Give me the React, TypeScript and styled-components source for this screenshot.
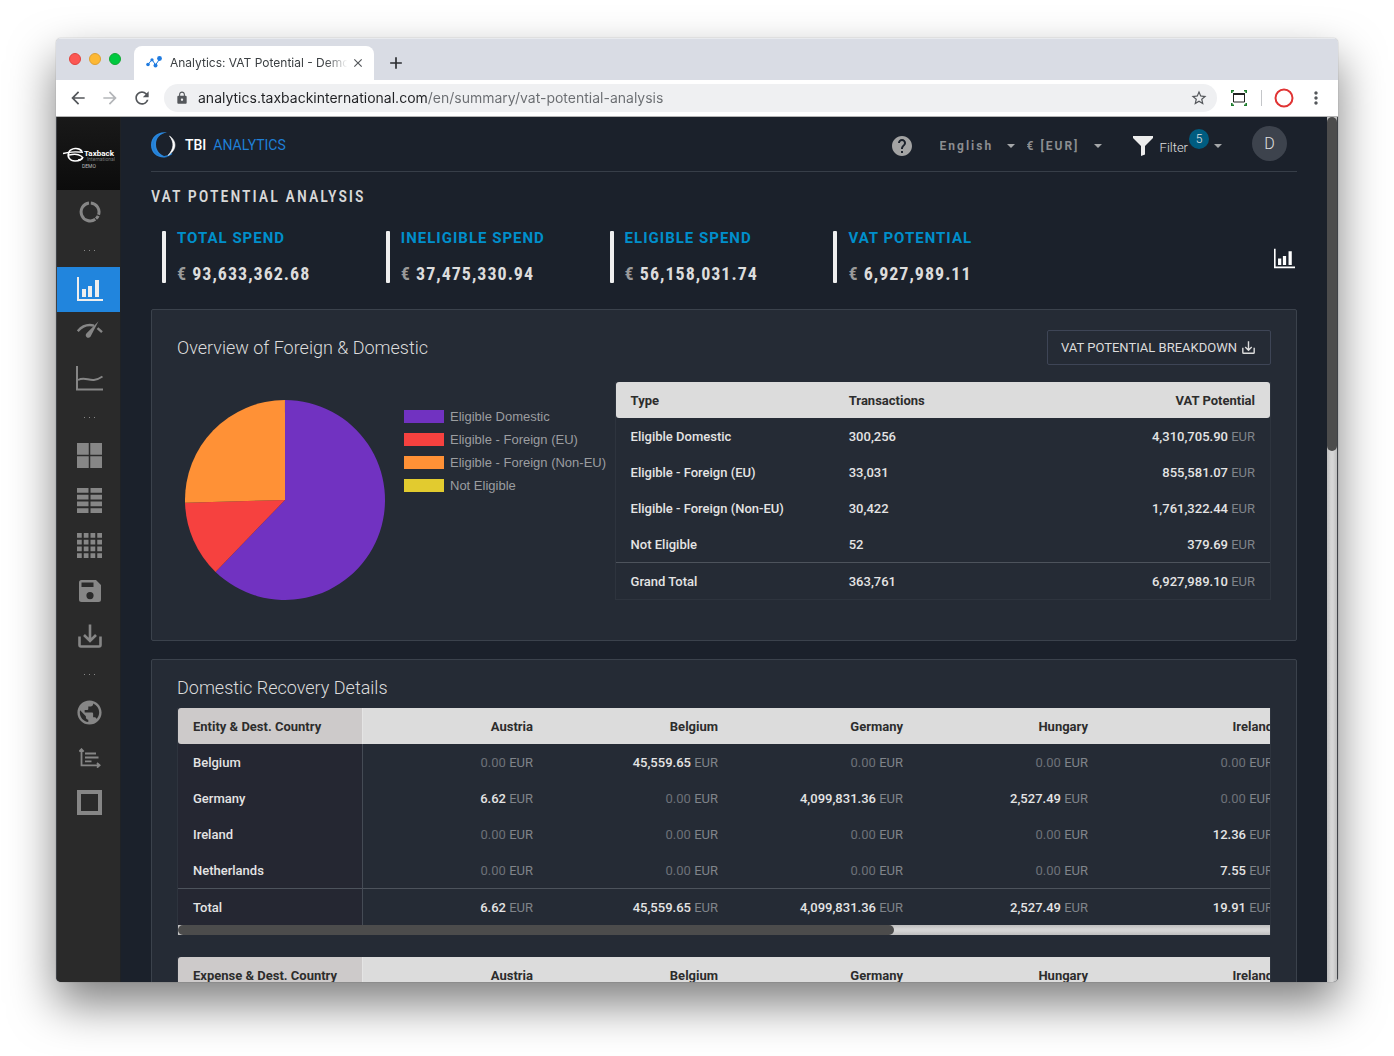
import React from "react";
import styled, { createGlobalStyle, css } from "styled-components";
import {
  MdArrowBack,
  MdArrowForward,
  MdClose,
  MdAdd,
  MdRefresh,
  MdLock,
  MdStarBorder,
  MdMoreVert,
  MdHelp,
  MdPublic,
} from "react-icons/md";

const roboto = `Roboto, "Liberation Sans", sans-serif`;
const condensed = `"Roboto Condensed", Roboto, "Liberation Sans", sans-serif`;

const Global = createGlobalStyle`
  *, *::before, *::after { box-sizing: border-box; }
  body { margin: 0; background: #fff; font-family: ${roboto}; }
  button, select, input { font: inherit; color: inherit; border: 0; background: none; padding: 0; margin: 0; }
  h1, h2, p, ul { margin: 0; padding: 0; }
  a { color: inherit; text-decoration: none; }
  svg { display: block; flex: none; }
`;

/* ---------- browser window ---------- */

const Desktop = styled.div`
  height: 100vh;
  padding: 38px 56px 74px;
  overflow: hidden;
`;

const Window = styled.div`
  height: 100%;
  display: flex;
  flex-direction: column;
  border-radius: 5px;
  overflow: hidden;
  background: #fff;
  box-shadow: 0 0 1px rgba(0, 0, 0, 0.5), 0 22px 46px rgba(0, 0, 0, 0.5);
`;

const TabStrip = styled.div`
  flex: none;
  height: 42px;
  display: flex;
  align-items: flex-end;
  background: #d9dce4;
  border-top: 1px solid #e8eaee;
`;

const Lights = styled.div`
  display: flex;
  gap: 8px;
  align-self: center;
  width: 78px;
  padding: 0 0 2px 13px;
`;

const Light = styled.span<{ $fill: string; $edge: string }>`
  width: 12px;
  height: 12px;
  border-radius: 50%;
  background: ${(p) => p.$fill};
  border: 1px solid ${(p) => p.$edge};
`;

const Tab = styled.div`
  width: 240px;
  height: 34px;
  display: flex;
  align-items: center;
  padding: 0 11px 2px 12px;
  background: #fff;
  border-radius: 8px 8px 0 0;
  color: #3c4043;
`;

const TabTitle = styled.span`
  flex: 1;
  margin-left: 8px;
  overflow: hidden;
  white-space: nowrap;
  font-size: 12px;
  font-family: Inter, Roboto, sans-serif;
  mask-image: linear-gradient(90deg, #000 86%, transparent 98%);
`;

const IconButton = styled.button<{ $size?: number; $tone?: string }>`
  width: ${(p) => p.$size ?? 20}px;
  height: ${(p) => p.$size ?? 20}px;
  flex: none;
  display: grid;
  place-items: center;
  color: ${(p) => p.$tone ?? "#54575b"};
  cursor: pointer;
`;

const NewTab = styled(IconButton)`
  margin: 0 0 7px 12px;
`;

const Toolbar = styled.div`
  flex: none;
  height: 37px;
  display: flex;
  align-items: center;
  padding: 0 12px;
  gap: 12px;
  border-bottom: 1px solid #b4b4b4;
`;

const Omnibox = styled.label`
  flex: 1;
  height: 28px;
  display: flex;
  align-items: center;
  gap: 9px;
  padding: 0 8px 1px 11px;
  border-radius: 14px;
  background: #eff0f2;
  color: #54575b;
`;

const UrlInput = styled.input`
  flex: 1;
  min-width: 0;
  height: 20px;
  font-family: Inter, Roboto, sans-serif;
  font-size: 14px;
  outline: 0;
  background: linear-gradient(90deg, #202124 229px, #6a6d71 229px);
  background-clip: text;
  -webkit-background-clip: text;
  -webkit-text-fill-color: transparent;
`;

const Extensions = styled.div`
  display: flex;
  align-items: center;
  gap: 12px;
`;

const Separator = styled.span`
  width: 1px;
  height: 16px;
  background: #c4c6c9;
`;

/* ---------- page frame ---------- */

const Viewport = styled.div`
  flex: 1;
  min-height: 0;
  display: flex;
  background: #1b212b;
  border: solid #3f4247;
  border-width: 0 1px;
`;

const Sidebar = styled.nav`
  flex: none;
  width: 64px;
  background: #2a2a2a;
  border-right: 1px solid #1f2226;
  overflow: hidden;
`;

const SideLogo = styled.a`
  height: 73px;
  display: grid;
  place-items: center;
  background: linear-gradient(#191919, #0c0c0c);
`;

const SideItem = styled.a<{ $active?: boolean }>`
  height: 45px;
  padding: 0 0 2px 2px;
  display: grid;
  place-items: center;
  color: ${(p) => (p.$active ? "#eeeeee" : "#868686")};
  background: ${(p) => (p.$active ? "#2185dd" : "none")};
`;

const SideDots = styled.div`
  height: 32px;
  display: flex;
  align-items: center;
  justify-content: center;
  gap: 4px;
  padding: 0 0 2px 2px;

  span {
    width: 1px;
    height: 1px;
    background: #888;
  }
`;

const Main = styled.main`
  flex: 1;
  min-width: 0;
  padding: 0 30px;
  overflow: hidden;
`;

const VScroll = styled.div`
  flex: none;
  width: 10px;
  background: linear-gradient(90deg, #bdbdbd, #d6d6d6 40%, #d6d6d6 60%, #bdbdbd);
`;

const VThumb = styled.div`
  height: 334px;
  border-radius: 5px;
  background: #4c4c4c;
`;

/* ---------- header ---------- */

const Header = styled.header`
  height: 55px;
  display: flex;
  align-items: center;
  border-bottom: 1px solid #373e48;
`;

const Brand = styled.a`
  display: flex;
  align-items: center;
  padding-top: 2px;
  font-size: 14px;
  color: #1f7fd6;

  b {
    margin: 0 7px 0 9px;
    font-weight: 500;
    color: #fff;
  }
`;

const Tools = styled.div`
  margin-left: auto;
  padding-top: 4px;
  display: flex;
  align-items: center;
`;

const Pickers = styled.div`
  display: flex;
  gap: 12px;
  margin: 0 31px 0 26px;
`;

const Picker = styled.label`
  display: grid;
  align-items: center;
  width: 75px;
  color: #8b8d90;

  > * {
    grid-area: 1 / 1;
  }

  > svg {
    justify-self: end;
    pointer-events: none;
  }
`;

const Select = styled.select`
  appearance: none;
  width: 100%;
  font-size: 12px;
  font-weight: 700;
  letter-spacing: 2px;
`;

const FilterButton = styled.button`
  display: flex;
  align-items: center;
  color: #e0e0e0;
  font-size: 13px;
  font-weight: 300;
  cursor: pointer;
`;

const FilterText = styled.span`
  margin-left: 7px;
  padding-top: 3px;
`;

const Badge = styled.span`
  width: 20px;
  height: 20px;
  margin: 0 5px 14px 1px;
  border-radius: 50%;
  background: #005c80;
  font-size: 12px;
  line-height: 20px;
  text-align: center;
`;

const Avatar = styled.button`
  width: 35px;
  height: 35px;
  margin: 0 10px 6px 30px;
  border-radius: 50%;
  background: #3d434d;
  color: #e0e0e0;
  font-size: 16px;
  font-weight: 300;
  cursor: pointer;
`;

/* ---------- summary ---------- */

const PageTitle = styled.h1`
  padding-top: 15px;
  font-family: ${condensed};
  font-size: 16px;
  line-height: 20px;
  font-weight: 500;
  letter-spacing: 2px;
  color: #d8d8d8;
`;

const Summary = styled.section`
  display: grid;
  grid-template-columns: repeat(5, 1fr);
  align-items: center;
  margin: 24px 16px 26px 11px;
`;

const Kpi = styled.div`
  height: 52px;
  display: flex;
  gap: 11px;

  &::before {
    content: "";
    width: 4px;
    border-radius: 1px;
    background: #efefef;
  }
`;

const KpiLabel = styled.p`
  font-size: 15px;
  line-height: 14px;
  font-weight: 700;
  letter-spacing: 1px;
  color: #008fcb;
`;

const KpiValue = styled.p`
  margin-top: 19px;
  font-family: ${condensed};
  font-size: 18px;
  line-height: 20px;
  font-weight: 700;
  letter-spacing: 1px;
  color: #dcdcdc;

  span {
    color: #9a9a9a;
  }
`;

const ChartToggle = styled.button`
  justify-self: end;
  margin: 2px -14px 0 0;
  color: #fff;
  cursor: pointer;
`;

/* ---------- cards ---------- */

const Card = styled.section<{ $pad: string }>`
  padding: ${(p) => p.$pad};
  margin-bottom: 18px;
  border: 1px solid #3b424c;
  border-radius: 2px;
  background: #252b35;
`;

const CardHead = styled.div`
  display: flex;
  align-items: center;
  justify-content: space-between;
  margin-bottom: 17px;
`;

const CardTitle = styled.h2<{ $gap?: number }>`
  margin-bottom: ${(p) => p.$gap ?? 0}px;
  font-size: 18px;
  line-height: 24px;
  font-weight: 300;
  color: #dcdcdc;
`;

const OutlineButton = styled.button`
  height: 35px;
  display: flex;
  align-items: center;
  gap: 5px;
  padding: 0 15px 0 13px;
  border: 1px solid #3e4556;
  border-radius: 2px;
  color: #dcdcdc;
  font-size: 13px;
  cursor: pointer;
`;

const Split = styled.div`
  display: grid;
  grid-template-columns: 2fr 3fr;
`;

const ChartArea = styled.div`
  display: flex;
  gap: 19px;
  padding: 18px 0 0 8px;
  min-width: 0;
`;

const Legend = styled.ul`
  padding-top: 5px;
  list-style: none;
  font-family: "Liberation Sans", Arial, sans-serif;
  font-size: 13px;
  line-height: 23px;
  color: #9b9da0;
  white-space: nowrap;
`;

const LegendItem = styled.li<{ $color: string }>`
  display: flex;
  align-items: center;
  gap: 6px;

  &::before {
    content: "";
    width: 40px;
    height: 13px;
    background: ${(p) => p.$color};
  }
`;

const Table = styled.table<{ $pinned?: boolean }>`
  width: ${(p) => (p.$pinned ? "1110px" : "100%")};
  table-layout: fixed;
  border-collapse: separate;
  border-spacing: 0;
  font-size: 13px;
  font-weight: 500;
  color: #e4e4e4;

  th,
  td {
    height: 36px;
    padding: 0 15px;
    text-align: left;
    white-space: nowrap;
  }

  thead th {
    background: #dcdcdc;
    color: #2d2d2d;
    font-weight: 700;
  }

  tbody th {
    font-weight: 500;
  }

  tfoot th,
  tfoot td {
    height: 37px;
    border-top: 1px solid #4d535c;
    font-weight: 500;
  }

  thead th:first-child {
    border-radius: 3px 0 0 3px;
  }

  ${(p) =>
    p.$pinned
      ? css`
          th:first-child {
            background: #252732;
            border-right: 1px solid #454b55;
          }
          thead th:first-child {
            background: #cdcaca;
            border-right-color: #e4e4e4;
          }
          th:not(:first-child),
          td {
            text-align: right;
          }
        `
      : css`
          thead th:last-child {
            border-radius: 0 3px 3px 0;
          }
          th:last-child,
          td:last-child {
            text-align: right;
          }
        `}
`;

const TableFrame = styled.div`
  border: 1px solid #2e343e;
  border-top: 0;
  overflow: hidden;
`;

const ScrollFrame = styled.div`
  border: solid #2e343e;
  border-width: 0 1px;
  overflow: hidden;
  margin-bottom: 22px;
`;

const HScroll = styled.div`
  height: 10px;
  background: linear-gradient(#bdbdbd, #d4d4d4 40%, #d4d4d4 60%, #bdbdbd);
`;

const HThumb = styled.div`
  width: 716px;
  height: 10px;
  border-radius: 5px;
  background: #4c4c4c;
`;

const Unit = styled.span`
  color: #80848a;
  font-weight: 400;
`;

const Zero = styled.span`
  color: #6d7178;
  font-weight: 400;
`;

/* ---------- drawings ---------- */

const Caret = () => (
  <svg width="8" height="4" viewBox="0 0 8 4">
    <path d="M0 0h8L4 4z" fill="#a5a7a9" />
  </svg>
);

const BarsIcon = ({ size }: { size: number }) => (
  <svg width={size} height={size} viewBox="0 0 26 26" fill="currentColor">
    <path d="M0 1h2v22h24v2H0zM5 13h4v8H5zM11 10h4v11h-4zM18 4h4v17h-4z" />
  </svg>
);

const DownloadIcon = ({ size }: { size: number }) => (
  <svg width={size} height={size} viewBox="0 0 24 24" fill="none" stroke="currentColor" strokeWidth="2.600">
    <path d="M1.500 12.500v8.500q0 1.500 1.500 1.500h18q1.500 0 1.500-1.500v-8.500M12 .5v16M6 11l6 6 6-6" />
  </svg>
);

const BrandMark = () => (
  <svg width="25" height="26" viewBox="0 0 25 26">
    <path d="M16 .6C8-1 0 4 0 13s8 14.500 17.500 11.800C10 24.500 5 19 5 12.500 5 6 9 1.800 16 .6z" fill="#2b86db" />
    <path d="M8 3A11.500 11.500 0 0 0 8 23M12 24.500q5 .5 9-3" fill="none" stroke="#1f7fd6" strokeWidth="1.200" />
    <path d="M18.500 4C26 9 26 18 17 23.500 23 17 23.500 10.500 18.500 4z" fill="#fff" stroke="#fff" strokeWidth=".6" />
  </svg>
);

const DonutIcon = () => (
  <svg width="22" height="22" viewBox="0 0 22 22" fill="none" stroke="currentColor" strokeWidth="3">
    <path d="M11.800 2A9 9 0 0 1 19.560 13.780M19.200 14.800A9 9 0 0 1 17 17.700M16.300 18.300A9 9 0 1 1 10 2" />
  </svg>
);

const GaugeIcon = () => (
  <svg width="26" height="25" viewBox="0 0 26 25">
    <path d="M.7 10.200Q7.500 2.200 17 4.600M20.500 7.200l4.500 4" fill="none" stroke="currentColor" strokeWidth="2.400" />
    <path d="M21.500.2 9.600 12.300a2.600 2.600 0 1 0 4 3.200z" fill="currentColor" />
  </svg>
);

const LineIcon = () => (
  <svg width="27" height="25" viewBox="0 0 27 25" fill="none" stroke="currentColor" strokeWidth="2">
    <path d="M1 0v23.500h26M2 14c9-5 12 5 24.500-3.500" />
  </svg>
);

const GridIcon = ({ cols, rows }: { cols: number; rows: number }) => {
  const gap = cols * rows > 4 ? 2 : 1.5;
  const w = (25 - gap * (cols - 1)) / cols;
  const h = (25 - gap * (rows - 1)) / rows;
  return (
    <svg width="25" height="25" viewBox="0 0 25 25" fill="currentColor">
      {Array.from({ length: cols * rows }, (_, i) => (
        <rect key={i} x={(i % cols) * (w + gap)} y={Math.floor(i / cols) * (h + gap)} width={w} height={h} />
      ))}
    </svg>
  );
};

const SaveIcon = () => (
  <svg width="22" height="22" viewBox="0 0 22 22">
    <path
      fillRule="evenodd"
      fill="currentColor"
      d="M2.500 0H17l5 5v14.500a2.500 2.500 0 0 1-2.500 2.500h-17A2.500 2.500 0 0 1 0 19.500v-17A2.500 2.500 0 0 1 2.500 0zM2.500 2.500v4.500h12V2.500zM11 12a3.600 3.600 0 1 0 0 7.200 3.600 3.600 0 0 0 0-7.200z"
    />
  </svg>
);

const AxisIcon = () => (
  <svg width="22" height="20" viewBox="0 0 22 20" fill="none" stroke="currentColor" strokeWidth="1.800">
    <path d="M2.500 1.500v15.800H20M.3 3.600l2.200-2.400 2.200 2.400M18 15l2.600 2.300L18 19.600M6 5.500h11M6 9.500h13.500M6 13.300h6.500" />
  </svg>
);

const SquareIcon = () => (
  <svg width="25" height="25" viewBox="0 0 25 25" fill="none" stroke="currentColor" strokeWidth="4">
    <path d="M2 2h21v21H2z" />
  </svg>
);

const TaxbackLogo = () => (
  <svg width="52" height="32" viewBox="0 0 52 32">
    <path d="M19 13.500C16 9 8 10 6 14c-2.500 5 1 9 6 9 4 0 7-1.500 8-4" fill="none" stroke="#fff" strokeWidth="1.600" />
    <path d="M0 15.500q8-2.500 20-1.200M6 17q8-2 12 1t-3 4" stroke="#fff" strokeWidth="1.400" fill="none" />
    <text x="21" y="18" fontFamily="Roboto" fontWeight="700" fontSize="8" fill="#fff">Taxback</text>
    <text x="24" y="23" fontFamily="Roboto" fontSize="5" fill="#777">International</text>
    <text x="19" y="30" fontFamily="Roboto" fontSize="5" fill="#bbb">DEMO</text>
  </svg>
);

const Favicon = () => (
  <svg width="16" height="12" viewBox="0 0 16 12" fill="#1f7be0">
    <path d="M2 8.500 6 3.500 9.500 9 14 2.500" stroke="#1f7be0" fill="none" />
    <circle cx="2" cy="8.500" r="1.800" />
    <circle cx="6" cy="3.800" r="1.600" />
    <circle cx="9.500" cy="9.500" r="2" />
    <circle cx="13.500" cy="2.500" r="2.400" />
  </svg>
);

const CaptureIcon = () => (
  <svg width="16" height="16" viewBox="0 0 16 16" fill="none">
    <path d="M.8 3V.8H3M13 .8h2.200V3M15.200 13v2.200H13M3 15.200H.8V13" stroke="#1c7c2c" strokeWidth="1.600" />
    <path d="M2.500 4.500h11v7.500h-11z" stroke="#222" />
    <path d="M2 4h12" stroke="#222" strokeWidth="2" />
  </svg>
);

const FunnelIcon = () => (
  <svg width="20" height="20" viewBox="0 0 20 20" fill="#ececec">
    <path d="M0 0h20v2l-8 8v8.500L8 20V10L0 2z" />
  </svg>
);

const slices = [
  { label: "Eligible Domestic", count: "300,256", value: 4310705.9, color: "#7132c1" },
  { label: "Eligible - Foreign (EU)", count: "33,031", value: 855581.07, color: "#f6413f" },
  { label: "Eligible - Foreign (Non-EU)", count: "30,422", value: 1761322.44, color: "#ff9136" },
  { label: "Not Eligible", count: "52", value: 379.69, color: "#e2cb2f" },
];

const money = (n: number) => n.toLocaleString("en-US", { minimumFractionDigits: 2, maximumFractionDigits: 2 });

const Pie = () => {
  const total = slices.reduce((s, x) => s + x.value, 0);
  const at = (t: number) => `${100 + 100 * Math.sin(2 * Math.PI * t)} ${100 - 100 * Math.cos(2 * Math.PI * t)}`;
  let sum = 0;
  return (
    <svg width="200" height="200" viewBox="0 0 200 200" role="img" aria-label="Share by type">
      {slices.map((s) => {
        const from = sum / total;
        sum += s.value;
        const to = sum / total;
        return (
          <path key={s.label} fill={s.color} d={`M100 100L${at(from)}A100 100 0 ${to - from > 0.5 ? 1 : 0} 1 ${at(to)}z`} />
        );
      })}
    </svg>
  );
};

/* ---------- data table ---------- */

type Row = { name: string; values: number[] };

const countries = ["Austria", "Belgium", "Germany", "Hungary", "Ireland"];
const entityRows: Row[] = [
  { name: "Belgium", values: [0, 45559.65, 0, 0, 0] },
  { name: "Germany", values: [6.62, 0, 4099831.36, 2527.49, 0] },
  { name: "Ireland", values: [0, 0, 0, 0, 12.36] },
  { name: "Netherlands", values: [0, 0, 0, 0, 7.55] },
];

const Amount = ({ value }: { value: number }) => (
  <>
    {value === 0 ? <Zero>0.00</Zero> : money(value)} <Unit>EUR</Unit>
  </>
);

const RecoveryTable = ({ heading, rows }: { heading: string; rows: Row[] }) => (
  <ScrollFrame>
    <Table $pinned>
      <thead>
        <tr>
          <th scope="col">{heading}</th>
          {countries.map((c) => (
            <th key={c} scope="col">{c}</th>
          ))}
        </tr>
      </thead>
      <tbody>
        {rows.map((row) => (
          <tr key={row.name}>
            <th scope="row">{row.name}</th>
            {row.values.map((v, i) => (
              <td key={countries[i]}><Amount value={v} /></td>
            ))}
          </tr>
        ))}
      </tbody>
      {rows.length > 0 && (
        <tfoot>
          <tr>
            <th scope="row">Total</th>
            {countries.map((c, i) => (
              <td key={c}><Amount value={rows.reduce((s, row) => s + row.values[i], 0)} /></td>
            ))}
          </tr>
        </tfoot>
      )}
    </Table>
    <HScroll><HThumb /></HScroll>
  </ScrollFrame>
);

const kpis = [
  ["TOTAL SPEND", "93,633,362.68"],
  ["INELIGIBLE SPEND", "37,475,330.94"],
  ["ELIGIBLE SPEND", "56,158,031.74"],
  ["VAT POTENTIAL", "6,927,989.11"],
];

const Dots = () => (
  <SideDots>
    <span />
    <span />
    <span />
  </SideDots>
);

export default function App() {
  return (
    <Desktop>
      <Global />
      <Window>
        <TabStrip>
          <Lights>
            <Light $fill="#fc5753" $edge="#e0443e" />
            <Light $fill="#fdb834" $edge="#dea032" />
            <Light $fill="#00c940" $edge="#12a834" />
          </Lights>
          <Tab>
            <Favicon />
            <TabTitle>Analytics: VAT Potential - Demo</TabTitle>
            <IconButton $size={12} aria-label="Close tab"><MdClose size={14} /></IconButton>
          </Tab>
          <NewTab aria-label="New tab" $tone="#2b2d30"><MdAdd size={20} /></NewTab>
        </TabStrip>
        <Toolbar>
          <IconButton aria-label="Back"><MdArrowBack size={20} /></IconButton>
          <IconButton aria-label="Forward" $tone="#b4b6b9"><MdArrowForward size={20} /></IconButton>
          <IconButton aria-label="Reload"><MdRefresh size={20} /></IconButton>
          <Omnibox>
            <MdLock size={14} />
            <UrlInput
              aria-label="Address"
              defaultValue="analytics.taxbackinternational.com/en/summary/vat-potential-analysis"
            />
            <IconButton aria-label="Bookmark"><MdStarBorder size={18} /></IconButton>
          </Omnibox>
          <Extensions>
            <IconButton aria-label="Capture"><CaptureIcon /></IconButton>
            <Separator />
            <IconButton aria-label="Extension">
              <svg width="20" height="20" viewBox="0 0 20 20">
                <circle cx="10" cy="10" r="8.500" fill="none" stroke="#e03434" strokeWidth="2" />
              </svg>
            </IconButton>
            <IconButton aria-label="Menu"><MdMoreVert size={20} /></IconButton>
          </Extensions>
        </Toolbar>

        <Viewport>
          <Sidebar>
            <SideLogo href="#" aria-label="Taxback International"><TaxbackLogo /></SideLogo>
            <SideItem href="#" aria-label="Overview"><DonutIcon /></SideItem>
            <Dots />
            <SideItem href="#" aria-label="VAT potential" $active><BarsIcon size={26} /></SideItem>
            <SideItem href="#" aria-label="Performance"><GaugeIcon /></SideItem>
            <SideItem href="#" aria-label="Trends"><LineIcon /></SideItem>
            <Dots />
            <SideItem href="#" aria-label="Tiles"><GridIcon cols={2} rows={2} /></SideItem>
            <SideItem href="#" aria-label="List"><GridIcon cols={2} rows={4} /></SideItem>
            <SideItem href="#" aria-label="Matrix"><GridIcon cols={4} rows={4} /></SideItem>
            <SideItem href="#" aria-label="Saved"><SaveIcon /></SideItem>
            <SideItem href="#" aria-label="Downloads"><DownloadIcon size={24} /></SideItem>
            <Dots />
            <SideItem href="#" aria-label="Countries"><MdPublic size={29} /></SideItem>
            <SideItem href="#" aria-label="Timeline"><AxisIcon /></SideItem>
            <SideItem href="#" aria-label="Frame"><SquareIcon /></SideItem>
          </Sidebar>

          <Main>
            <Header>
              <Brand href="#">
                <BrandMark />
                <b>TBI</b>ANALYTICS
              </Brand>
              <Tools>
                <IconButton aria-label="Help" $size={24} $tone="#a3a3a3"><MdHelp size={24} /></IconButton>
                <Pickers>
                  <Picker>
                    <Select aria-label="Language"><option>English</option></Select>
                    <Caret />
                  </Picker>
                  <Picker>
                    <Select aria-label="Currency"><option>€ [EUR]</option></Select>
                    <Caret />
                  </Picker>
                </Pickers>
                <FilterButton>
                  <FunnelIcon />
                  <FilterText>Filter</FilterText>
                  <Badge>5</Badge>
                  <Caret />
                </FilterButton>
                <Avatar aria-label="Account">D</Avatar>
              </Tools>
            </Header>

            <PageTitle>VAT POTENTIAL ANALYSIS</PageTitle>
            <Summary>
              {kpis.map(([label, value]) => (
                <Kpi key={label}>
                  <div>
                    <KpiLabel>{label}</KpiLabel>
                    <KpiValue><span>€</span> {value}</KpiValue>
                  </div>
                </Kpi>
              ))}
              <ChartToggle aria-label="Show chart"><BarsIcon size={21} /></ChartToggle>
            </Summary>

            <Card $pad="20px 25px 40px">
              <CardHead>
                <CardTitle>Overview of Foreign &amp; Domestic</CardTitle>
                <OutlineButton>
                  VAT POTENTIAL BREAKDOWN <DownloadIcon size={13} />
                </OutlineButton>
              </CardHead>
              <Split>
                <ChartArea>
                  <Pie />
                  <Legend>
                    {slices.map((s) => (
                      <LegendItem key={s.label} $color={s.color}>{s.label}</LegendItem>
                    ))}
                  </Legend>
                </ChartArea>
                <TableFrame>
                  <Table>
                    <thead>
                      <tr>
                        <th scope="col">Type</th>
                        <th scope="col">Transactions</th>
                        <th scope="col">VAT Potential</th>
                      </tr>
                    </thead>
                    <tbody>
                      {slices.map((s) => (
                        <tr key={s.label}>
                          <th scope="row">{s.label}</th>
                          <td>{s.count}</td>
                          <td><Amount value={s.value} /></td>
                        </tr>
                      ))}
                    </tbody>
                    <tfoot>
                      <tr>
                        <th scope="row">Grand Total</th>
                        <td>363,761</td>
                        <td><Amount value={6927989.1} /></td>
                      </tr>
                    </tfoot>
                  </Table>
                </TableFrame>
              </Split>
            </Card>

            <Card $pad="16px 25px">
              <CardTitle $gap={8}>Domestic Recovery Details</CardTitle>
              <RecoveryTable heading="Entity & Dest. Country" rows={entityRows} />
              <RecoveryTable heading="Expense & Dest. Country" rows={[]} />
            </Card>
          </Main>
          <VScroll><VThumb /></VScroll>
        </Viewport>
      </Window>
    </Desktop>
  );
}
